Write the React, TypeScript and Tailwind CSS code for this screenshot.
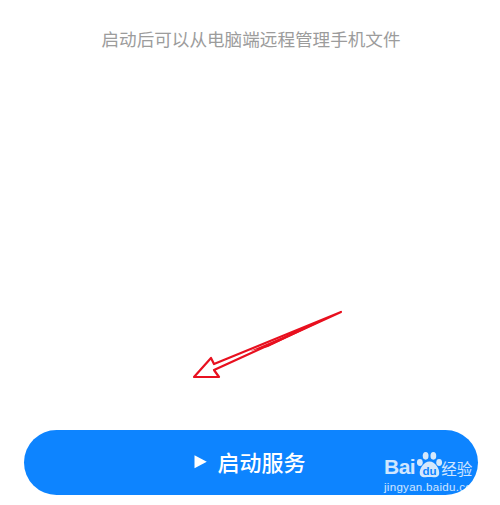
export default function App() {
  const cjk = { fontFamily: '"Noto Sans CJK SC", sans-serif' };
  return (
    <div className="relative flex h-[505px] w-[500px] flex-col items-center overflow-hidden bg-white font-['Noto_Sans_CJK_SC',sans-serif]">
      <p className="ml-[2px] mt-[26px] text-[17.6px] leading-[26px] text-[#9c9c9c]" style={cjk}>
        启动后可以从电脑端远程管理手机文件
      </p>
      <div className="flex-1" />
      <button className="mb-[10px] ml-[2px] flex h-[65px] w-[454px] items-center justify-center gap-[10px] rounded-[33px] bg-[#0d84ff] pr-[2px] text-white">
        <svg width="13" height="14" viewBox="0 0 13 14" className="mt-[-2px]">
          <path d="M0.5 0.3 L12.8 6.8 L0.5 13.3 Z" fill="#ffffff" />
        </svg>
        <span className="mt-[-4px] text-[22px] font-medium leading-none" style={cjk}>启动服务</span>
      </button>

      <svg className="absolute left-0 top-0" width="500" height="505" viewBox="0 0 500 505" fill="none">
        <path
          d="M341 312 L214 364 L211 358 L194 377 L219 377 L214 370 Z"
          stroke="#e8101f"
          strokeWidth="2.2"
          strokeLinejoin="round"
        />
        <path d="M341 312 L250 351 L268 347 Z" fill="#e8101f" />
      </svg>

      <div className="absolute left-[384px] top-[451px] flex w-[116px] flex-col text-white/80">
        <div className="flex h-[29px] items-center">
          <span className="mt-[2px] text-[21px] font-bold leading-none tracking-[-0.5px]" style={{ fontFamily: '"Liberation Sans", sans-serif' }}>Bai</span>
          <svg width="27" height="27" viewBox="0 0 28 28" className="ml-[1px] mt-[-2px]">
            <g fill="#d5e8fb">
              <ellipse cx="4" cy="12" rx="3" ry="3.6" />
              <ellipse cx="10" cy="5" rx="3" ry="4" />
              <ellipse cx="18" cy="5" rx="3" ry="4" />
              <ellipse cx="24" cy="12" rx="3" ry="3.6" />
              <path d="M14 11 C8 11 3 19 4 24 C5 28 10 27 14 27 C18 27 23 28 24 24 C25 19 20 11 14 11 Z" />
            </g>
            <text x="14" y="25" textAnchor="middle" fontSize="12" fontWeight="700" fill="#0d84ff" fontFamily="Liberation Sans, sans-serif">du</text>
          </svg>
          <span className="ml-[-2px] mt-[6px] text-[15.5px] leading-none" style={cjk}>经验</span>
        </div>
        <span className="text-[11.5px] leading-[14px] tracking-[0.3px] text-white/80" style={{ fontFamily: '"Liberation Sans", sans-serif' }}>jingyan.baidu.com</span>
      </div>
    </div>
  );
}
